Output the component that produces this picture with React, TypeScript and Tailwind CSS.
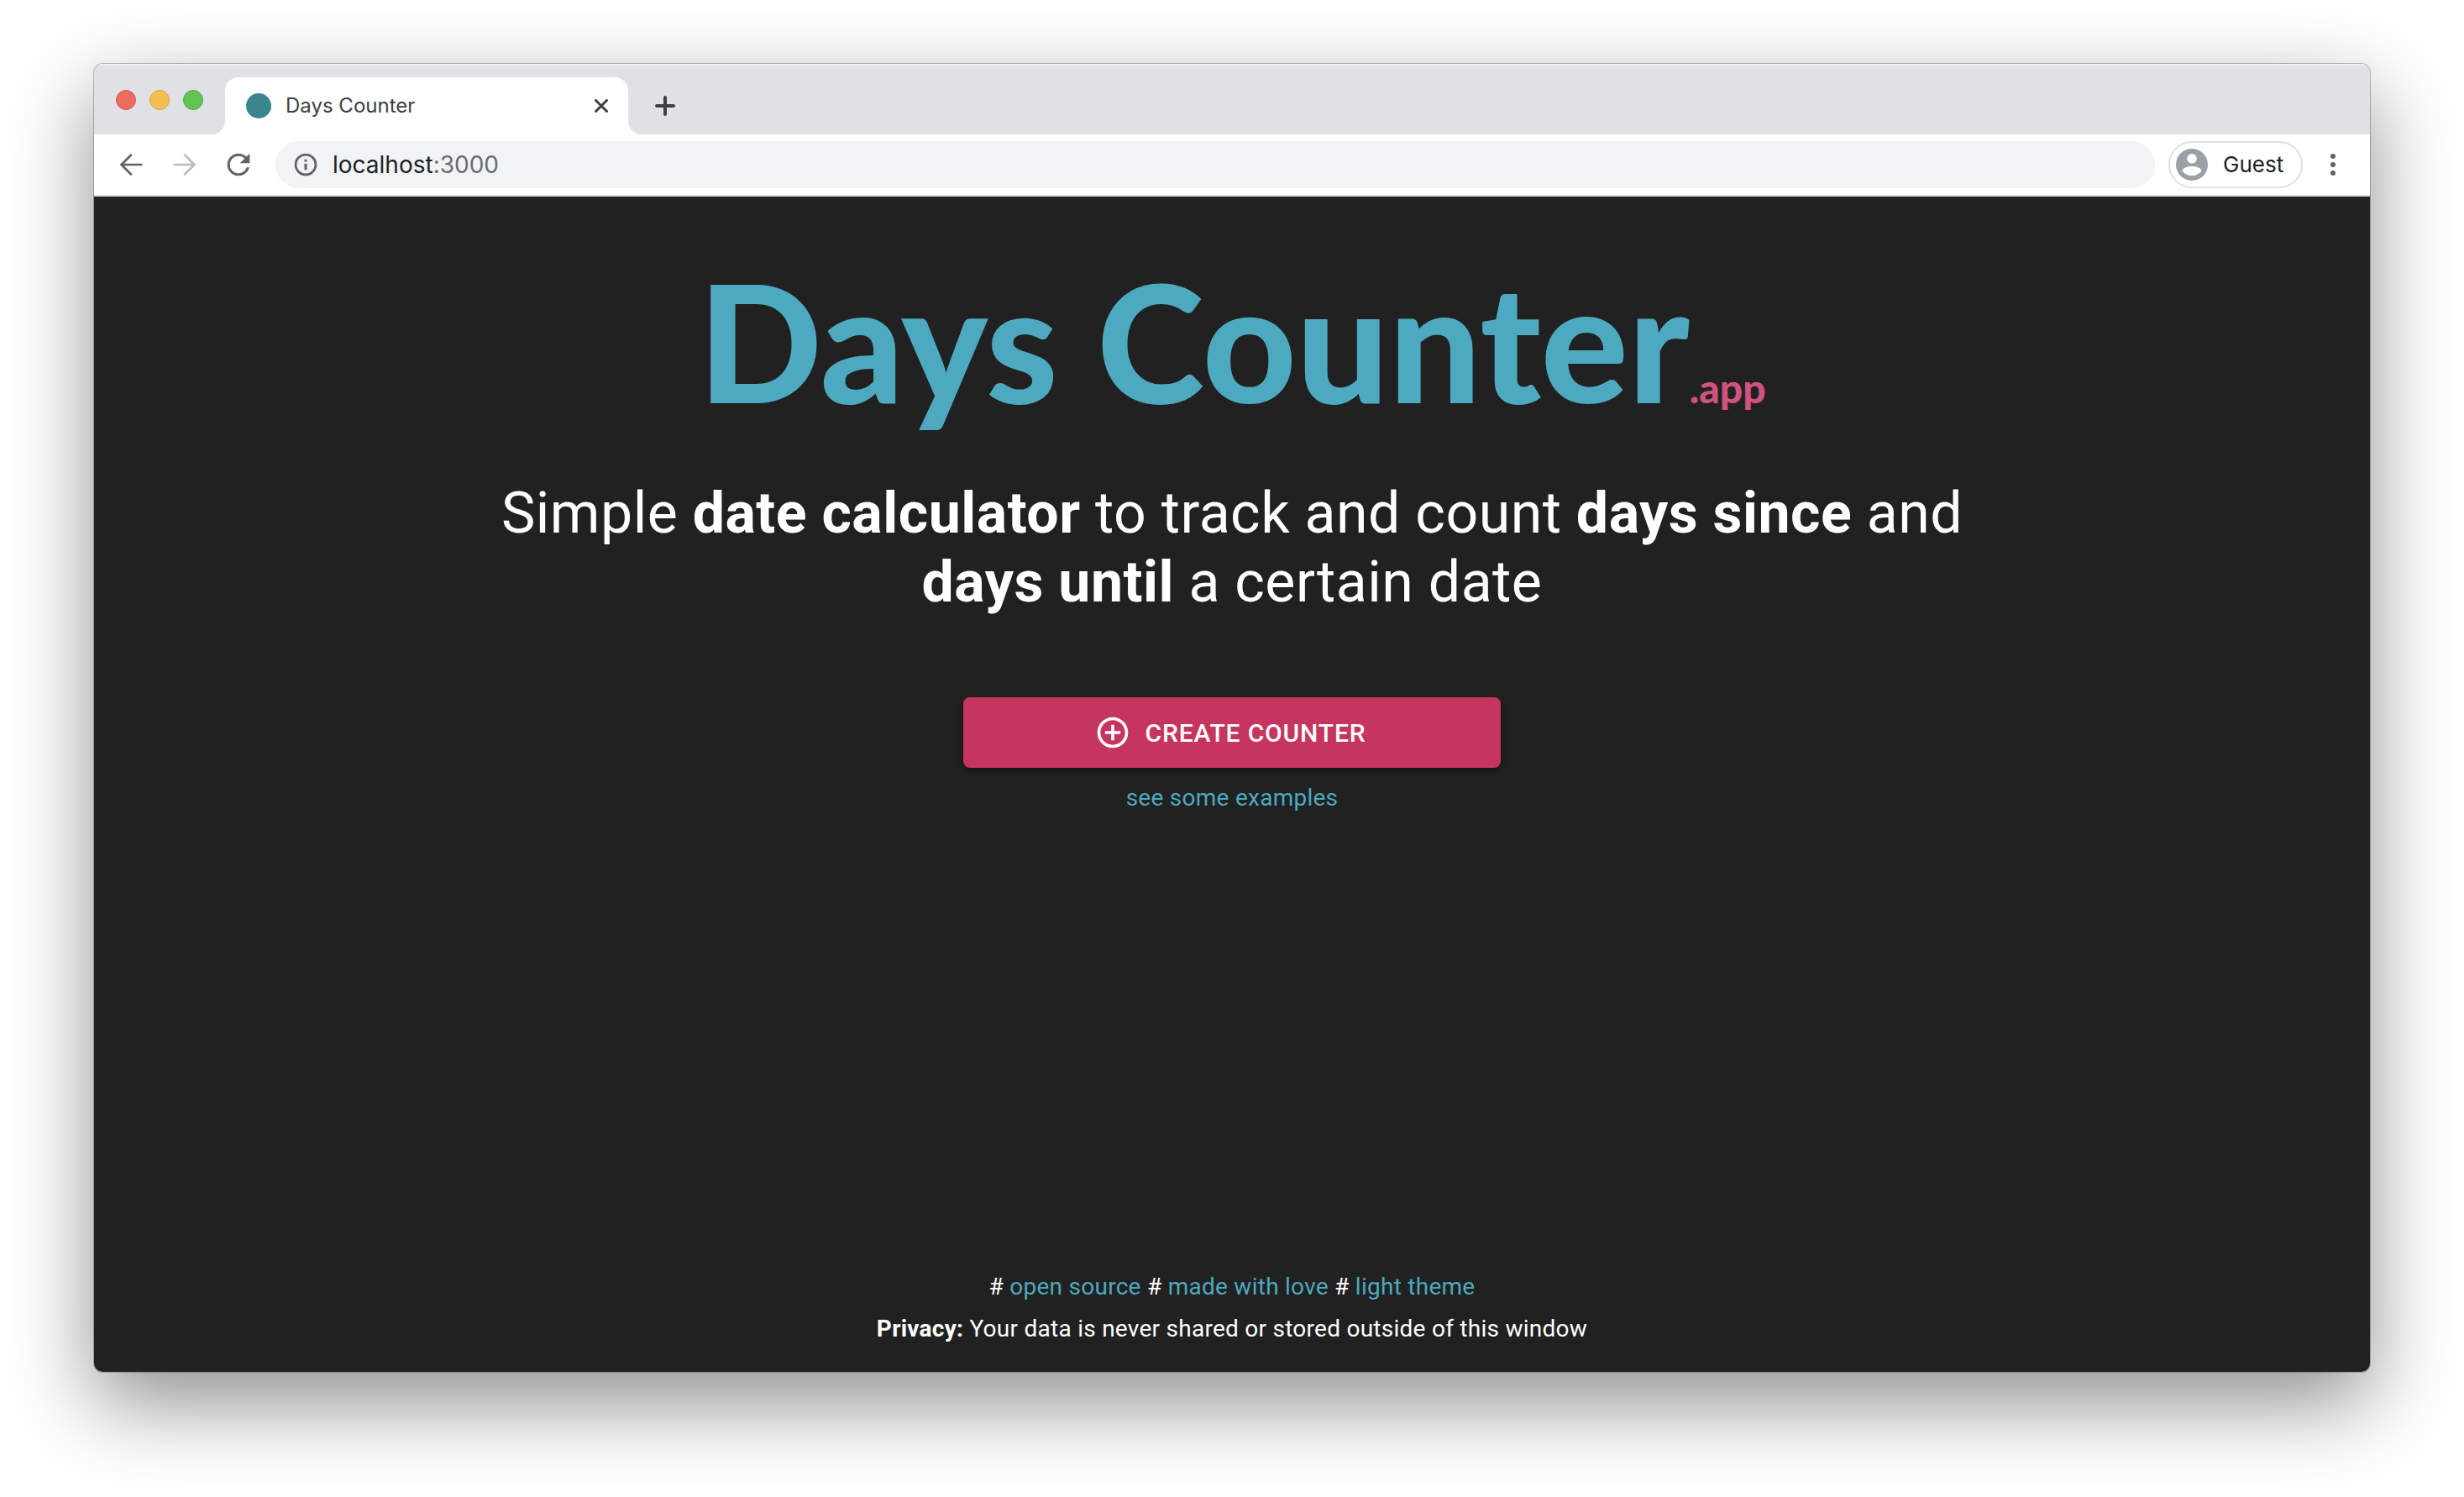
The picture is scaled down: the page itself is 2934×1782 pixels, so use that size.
import React from "react";

const TRAFFIC_LIGHTS = [
  { label: "Close window", style: "bg-[#ed6a5e] border-[#d65a4f]" },
  { label: "Minimise window", style: "bg-[#f5bf4f] border-[#d9a343]" },
  { label: "Zoom window", style: "bg-[#61c554] border-[#52a945]" },
];

function TabStrip() {
  return (
    <header className="flex h-[84px] items-end bg-[#dfe1e5] shadow-[inset_0_2px_0_#eff0f2]">
      <div className="flex h-full w-[156px] shrink-0 items-center gap-4 pl-[26px] pt-0.5">
        {TRAFFIC_LIGHTS.map((light) => (
          <button
            key={light.label}
            aria-label={light.label}
            className={`size-6 rounded-full border ${light.style}`}
          />
        ))}
      </div>
      <div className="relative flex h-[68px] w-[480px] items-center rounded-t-[16px] bg-white pl-[25px] pr-4">
        <svg aria-hidden="true" className="absolute -left-4 bottom-0 size-4 fill-white" viewBox="0 0 16 16">
          <path d="M16 0v16H0A16 16 0 0 0 16 0Z" />
        </svg>
        <svg aria-hidden="true" className="absolute -right-4 bottom-0 size-4 fill-white" viewBox="0 0 16 16">
          <path d="M0 0v16h16A16 16 0 0 1 0 0Z" />
        </svg>
        <span className="size-[30px] rounded-full bg-[#3b858f]" />
        <span className="ml-[17px] flex-1 text-[24px] leading-8 text-[#3c4043]">Days Counter</span>
        <button aria-label="Close tab" className="flex size-8 items-center justify-center">
          <svg className="size-4 stroke-[#3c4043]" viewBox="0 0 16 16" strokeWidth="3" strokeLinecap="round">
            <path d="M1.5 1.5l13 13M14.5 1.5l-13 13" />
          </svg>
        </button>
      </div>
      <button aria-label="New tab" className="ml-7 flex h-[68px] w-8 items-center justify-center">
        <svg className="size-6 stroke-[#3c4043]" viewBox="0 0 24 24" strokeWidth="4" strokeLinecap="round">
          <path d="M12 2v20M2 12h20" />
        </svg>
      </button>
    </header>
  );
}

function Toolbar() {
  return (
    <nav aria-label="Browser" className="flex h-[74px] items-center border-b-2 border-[#dadce0] bg-white pl-6 pr-7">
      <div className="flex shrink-0 gap-6">
        <button aria-label="Back" className="flex size-10 items-center justify-center">
          <svg className="size-10 fill-[#5f6368]" viewBox="0 0 24 24">
            <path d="M20 11.2H7.1l5.9-6L11.9 4 4 12l7.9 8 1.1-1.2-5.9-6H20z" />
          </svg>
        </button>
        <button aria-label="Forward" disabled className="flex size-10 items-center justify-center">
          <svg className="size-10 fill-[#babcbe]" viewBox="0 0 24 24">
            <path d="M4 11.2h12.9l-5.9-6L12.1 4l7.9 8-7.9 8-1.1-1.2 5.9-6H4z" />
          </svg>
        </button>
        <button aria-label="Reload" className="flex size-10 items-center justify-center">
          <svg className="size-10 fill-[#5f6368]" viewBox="0 0 24 24">
            <path d="M17.65 6.35A7.96 7.96 0 0 0 12 4a8 8 0 1 0 7.73 10h-1.9A6.2 6.2 0 1 1 12 5.8c1.75 0 3.3.72 4.42 1.88L13 11h7V4z" />
          </svg>
        </button>
      </div>
      <div className="ml-6 flex h-14 flex-1 items-center rounded-full bg-[#f1f3f4] pl-[22px]">
        <svg aria-hidden="true" className="size-7 fill-[#5f6368]" viewBox="0 0 28 28">
          <path
            fillRule="evenodd"
            d="M14 .7a13.3 13.3 0 1 1 0 26.6A13.3 13.3 0 0 1 14 .7Zm0 2.7a10.6 10.6 0 1 0 0 21.2 10.6 10.6 0 0 0 0-21.2Z"
          />
          <path d="M12.5 12.700h3v7.600h-3zM12.500 7.700h3v2.700h-3z" />
        </svg>
        <button aria-label="Address" className="ml-[18px] text-[28px] leading-8 text-[#202124]">
          localhost<span className="text-[#6a6d70]">:3000</span>
        </button>
      </div>
      <button className="ml-4 flex h-14 w-40 shrink-0 items-center rounded-full border-2 border-[#dfe0e2] pl-[7px]">
        <svg aria-hidden="true" className="size-[38px]" viewBox="0 0 38 38">
          <circle cx="19" cy="19" r="19" fill="#9aa0a6" />
          <circle cx="19" cy="11.8" r="5.8" fill="#fff" />
          <path d="M7.6 26.5c0-3.8 6-5.6 11.4-5.6s11.4 1.8 11.4 5.6c-2.4 3.4-6.6 5.6-11.4 5.6S10 29.9 7.6 26.5Z" fill="#fff" />
        </svg>
        <span className="ml-[18px] text-[26px] leading-8 text-[#202124]">Guest</span>
      </button>
      <button aria-label="Menu" className="ml-5 flex size-8 shrink-0 items-center justify-center">
        <svg className="h-[26px] w-1.5 fill-[#5f6368]" viewBox="0 0 6 26">
          <circle cx="3" cy="3" r="3" />
          <circle cx="3" cy="13" r="3" />
          <circle cx="3" cy="23" r="3" />
        </svg>
      </button>
    </nav>
  );
}

function Landing() {
  return (
    <div className="flex flex-1 flex-col items-center bg-[#212121] pb-[26px] pt-14 font-['Roboto',sans-serif] text-white">
      <main className="flex w-full flex-col items-center">
        <h1 className="flex items-baseline font-['Lato',sans-serif] text-[194px] font-black leading-[230px] text-[#4da9bf]">
          Days Counter
          <span className="text-[48px] leading-none text-[#d0527f]">.app</span>
        </h1>
        <p className="mt-[50px] max-w-[1840px] text-center text-[68px] leading-[82px] tracking-[0.00735em]">
          Simple <b>date calculator</b> to track and count <b>days since</b> and <b>days until</b> a certain date
        </p>
        <button className="mt-24 flex h-[84px] w-[640px] items-center justify-center gap-4 rounded-lg bg-[#c63560] pr-1 text-[30px] font-medium uppercase tracking-[0.02857em] shadow-[0_4px_8px_rgba(0,0,0,0.4)]">
          <svg aria-hidden="true" className="size-11 fill-white" viewBox="0 0 24 24">
            <path d="M13 7h-2v4H7v2h4v4h2v-4h4v-2h-4V7zm-1-5C6.48 2 2 6.48 2 12s4.48 10 10 10 10-4.48 10-10S17.52 2 12 2zm0 18c-4.41 0-8-3.59-8-8s3.59-8 8-8 8 3.59 8 8-3.59 8-8 8z" />
          </svg>
          Create counter
        </button>
        <a href="#examples" className="mt-4 text-[28px] leading-10 tracking-[0.00938em] text-[#4da9bf]">
          see some examples
        </a>
      </main>
      <footer className="mt-auto text-center text-[28px] leading-[50px] tracking-[0.00938em]">
        <p>
          # <a href="#source" className="text-[#4da9bf]">open source</a> #{" "}
          <a href="#love" className="text-[#4da9bf]">made with love</a> #{" "}
          <a href="#light" className="text-[#4da9bf]">light theme</a>
        </p>
        <p>
          <b>Privacy:</b> Your data is never shared or stored outside of this window
        </p>
      </footer>
    </div>
  );
}

export default function App() {
  return (
    <div className="flex min-h-screen flex-col bg-white px-28 pb-[149px] pt-[76px] font-['Inter',sans-serif]">
      <div className="flex flex-1 flex-col rounded-[10px] shadow-[0_0_0_1px_rgba(0,0,0,0.25),0_36px_100px_rgba(0,0,0,0.45)]">
        <div className="flex flex-1 flex-col overflow-hidden rounded-[10px]">
          <TabStrip />
          <Toolbar />
          <Landing />
        </div>
      </div>
    </div>
  );
}
